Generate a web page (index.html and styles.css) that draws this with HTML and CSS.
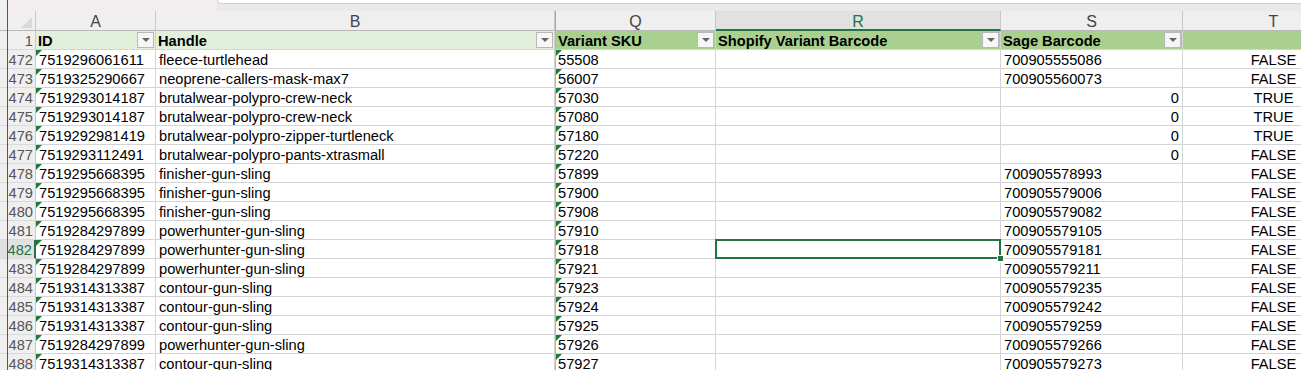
FILE: index.html
```html
<!DOCTYPE html>
<html lang="en">
<head>
    <meta charset="UTF-8">
    <meta name="viewport" content="width=device-width, initial-scale=1.0">
    <title>Products</title>
    <link rel="stylesheet" href="styles.css">
</head>
<body>
    <div class="edge"></div>

    <!-- Ribbon bottom edge -->
    <div class="topbar">
        <div class="topbar-left"></div>
        <div class="topbar-right"><div class="formula"></div></div>
    </div>

    <div class="sheet">
        <!-- Column letters -->
        <div class="corner"><span class="corner-tri"></span></div>
        <div class="col">A</div>
        <div class="col">B</div>
        <div class="col col-gap">Q</div>
        <div class="col col-active">R</div>
        <div class="col">S</div>
        <div class="col">T</div>

        <!-- Table header -->
        <div class="rh">1</div>
        <div class="c hd hd-light">ID<span class="filter"></span></div>
        <div class="c hd hd-light">Handle<span class="filter"></span></div>
        <div class="c hd gap">Variant SKU<span class="filter"></span></div>
        <div class="c hd">Shopify Variant Barcode<span class="filter"></span></div>
        <div class="c hd">Sage Barcode<span class="filter"></span></div>
        <div class="c hd"></div>

        <div class="rh">472</div>
        <div class="c txt">7519296061611</div>
        <div class="c">fleece-turtlehead</div>
        <div class="c txt gap">55508</div>
        <div class="c"></div>
        <div class="c">700905555086</div>
        <div class="c bool">FALSE</div>

        <div class="rh">473</div>
        <div class="c txt">7519325290667</div>
        <div class="c">neoprene-callers-mask-max7</div>
        <div class="c txt gap">56007</div>
        <div class="c"></div>
        <div class="c">700905560073</div>
        <div class="c bool">FALSE</div>

        <div class="rh">474</div>
        <div class="c txt">7519293014187</div>
        <div class="c">brutalwear-polypro-crew-neck</div>
        <div class="c txt gap">57030</div>
        <div class="c"></div>
        <div class="c num">0</div>
        <div class="c bool">TRUE</div>

        <div class="rh">475</div>
        <div class="c txt">7519293014187</div>
        <div class="c">brutalwear-polypro-crew-neck</div>
        <div class="c txt gap">57080</div>
        <div class="c"></div>
        <div class="c num">0</div>
        <div class="c bool">TRUE</div>

        <div class="rh">476</div>
        <div class="c txt">7519292981419</div>
        <div class="c">brutalwear-polypro-zipper-turtleneck</div>
        <div class="c txt gap">57180</div>
        <div class="c"></div>
        <div class="c num">0</div>
        <div class="c bool">TRUE</div>

        <div class="rh">477</div>
        <div class="c txt">7519293112491</div>
        <div class="c">brutalwear-polypro-pants-xtrasmall</div>
        <div class="c txt gap">57220</div>
        <div class="c"></div>
        <div class="c num">0</div>
        <div class="c bool">FALSE</div>

        <div class="rh">478</div>
        <div class="c txt">7519295668395</div>
        <div class="c">finisher-gun-sling</div>
        <div class="c txt gap">57899</div>
        <div class="c"></div>
        <div class="c">700905578993</div>
        <div class="c bool">FALSE</div>

        <div class="rh">479</div>
        <div class="c txt">7519295668395</div>
        <div class="c">finisher-gun-sling</div>
        <div class="c txt gap">57900</div>
        <div class="c"></div>
        <div class="c">700905579006</div>
        <div class="c bool">FALSE</div>

        <div class="rh">480</div>
        <div class="c txt">7519295668395</div>
        <div class="c">finisher-gun-sling</div>
        <div class="c txt gap">57908</div>
        <div class="c"></div>
        <div class="c">700905579082</div>
        <div class="c bool">FALSE</div>

        <div class="rh">481</div>
        <div class="c txt">7519284297899</div>
        <div class="c">powerhunter-gun-sling</div>
        <div class="c txt gap">57910</div>
        <div class="c"></div>
        <div class="c">700905579105</div>
        <div class="c bool">FALSE</div>

        <div class="rh rh-active">482</div>
        <div class="c txt">7519284297899</div>
        <div class="c">powerhunter-gun-sling</div>
        <div class="c txt gap">57918</div>
        <div class="c selected"><span class="handle"></span></div>
        <div class="c">700905579181</div>
        <div class="c bool">FALSE</div>

        <div class="rh">483</div>
        <div class="c txt">7519284297899</div>
        <div class="c">powerhunter-gun-sling</div>
        <div class="c txt gap">57921</div>
        <div class="c"></div>
        <div class="c">700905579211</div>
        <div class="c bool">FALSE</div>

        <div class="rh">484</div>
        <div class="c txt">7519314313387</div>
        <div class="c">contour-gun-sling</div>
        <div class="c txt gap">57923</div>
        <div class="c"></div>
        <div class="c">700905579235</div>
        <div class="c bool">FALSE</div>

        <div class="rh">485</div>
        <div class="c txt">7519314313387</div>
        <div class="c">contour-gun-sling</div>
        <div class="c txt gap">57924</div>
        <div class="c"></div>
        <div class="c">700905579242</div>
        <div class="c bool">FALSE</div>

        <div class="rh">486</div>
        <div class="c txt">7519314313387</div>
        <div class="c">contour-gun-sling</div>
        <div class="c txt gap">57925</div>
        <div class="c"></div>
        <div class="c">700905579259</div>
        <div class="c bool">FALSE</div>

        <div class="rh">487</div>
        <div class="c txt">7519284297899</div>
        <div class="c">powerhunter-gun-sling</div>
        <div class="c txt gap">57926</div>
        <div class="c"></div>
        <div class="c">700905579266</div>
        <div class="c bool">FALSE</div>

        <div class="rh">488</div>
        <div class="c txt">7519314313387</div>
        <div class="c">contour-gun-sling</div>
        <div class="c txt gap">57927</div>
        <div class="c"></div>
        <div class="c">700905579273</div>
        <div class="c bool">FALSE</div>
    </div>
</body>
</html>
```

FILE: styles.css
```css
body {
    margin: 0;
    background: #ffffff;
    font-family: "Liberation Sans", Arial, sans-serif;
    font-size: 11pt;
    color: #000;
    overflow: hidden;
}
.edge {
    position: absolute;
    left: 7px;
    top: 0;
    bottom: 0;
    width: 1px;
    background: #217346;
    z-index: 5;
}
.topbar {
    display: flex;
    height: 11px;
    background: #f0f0f0;
}
.topbar-left {
    width: 209px;
    margin-left: 8px;
    background: #f4eded;
}
.topbar-right {
    flex-grow: 1;
    background: #e9e9ec;
}
.formula {
    height: 3px;
    background: #ffffff;
    border-bottom: 1px solid #cfcfd4;
    border-left: 1px solid #cfcfd4;
    border-bottom-left-radius: 4px;
}
.sheet {
    display: grid;
    grid-template-columns: 36px 120px 399px 161px 285px 182px 182px;
    grid-template-rows: 20px;
    grid-auto-rows: 19px;
    width: 1365px;
}
.sheet > div {
    box-sizing: border-box;
    white-space: nowrap;
    overflow: hidden;
}
.corner {
    position: relative;
    background: #efefef;
    border-right: 1px solid #c8c8c8;
    border-bottom: 1px solid #b8b8b8;
}
.corner-tri {
    position: absolute;
    right: 3px;
    bottom: 2px;
    width: 0;
    height: 0;
    border-left: 11px solid transparent;
    border-bottom: 11px solid #d9d9d9;
}
.col {
    background: #efefef;
    color: #444;
    font-size: 16px;
    text-align: center;
    line-height: 20px;
    padding-top: 1px;
    border-right: 1px solid #c8c8c8;
    border-bottom: 1px solid #b8b8b8;
}
.col-gap {
    border-left: 1px solid #a8a8a8;
}
.col-active {
    background: #e1e1e1;
    color: #217346;
    border-bottom: 2px solid #217346;
}
.rh {
    background: #efefef;
    color: #555;
    text-align: right;
    padding-right: 2px;
    line-height: 20px;
    border-right: 1px solid #c8c8c8;
    border-bottom: 1px solid #dadada;
}
.rh-active {
    background: #e1e1e1;
    color: #217346;
    border-right: 2px solid #217346;
}
.c {
    position: relative;
    padding: 0 3px;
    line-height: 20px;
    border-right: 1px solid #d4d4d4;
    border-bottom: 1px solid #d4d4d4;
}
.gap {
    border-left: 1px solid #b4b4b4;
    padding-left: 2px;
}
.hd {
    background: #a9d08e;
    font-weight: bold;
    padding-left: 2px;
}
.hd-light {
    background: #e2efda;
}
.filter {
    position: absolute;
    right: 1px;
    top: 1px;
    width: 17px;
    height: 16px;
    box-sizing: border-box;
    background: #f6f6f6;
    border: 1px solid #b8b8b8;
}
.filter::after {
    content: "";
    position: absolute;
    left: 4px;
    top: 5px;
    border-left: 4px solid transparent;
    border-right: 4px solid transparent;
    border-top: 4px solid #666;
}
.txt::before {
    content: "";
    position: absolute;
    left: 0;
    top: 0;
    border-top: 6px solid #1f7a3c;
    border-right: 6px solid transparent;
}
.num {
    text-align: right;
}
.bool {
    text-align: center;
}
.selected {
    overflow: visible !important;
}
.selected::after {
    content: "";
    position: absolute;
    left: -1px;
    top: -1px;
    right: -1px;
    bottom: -1px;
    border: 2px solid #217346;
}
.handle {
    position: absolute;
    right: -4px;
    bottom: -4px;
    width: 5px;
    height: 5px;
    background: #217346;
    border: 1px solid #fff;
    z-index: 2;
}
```
